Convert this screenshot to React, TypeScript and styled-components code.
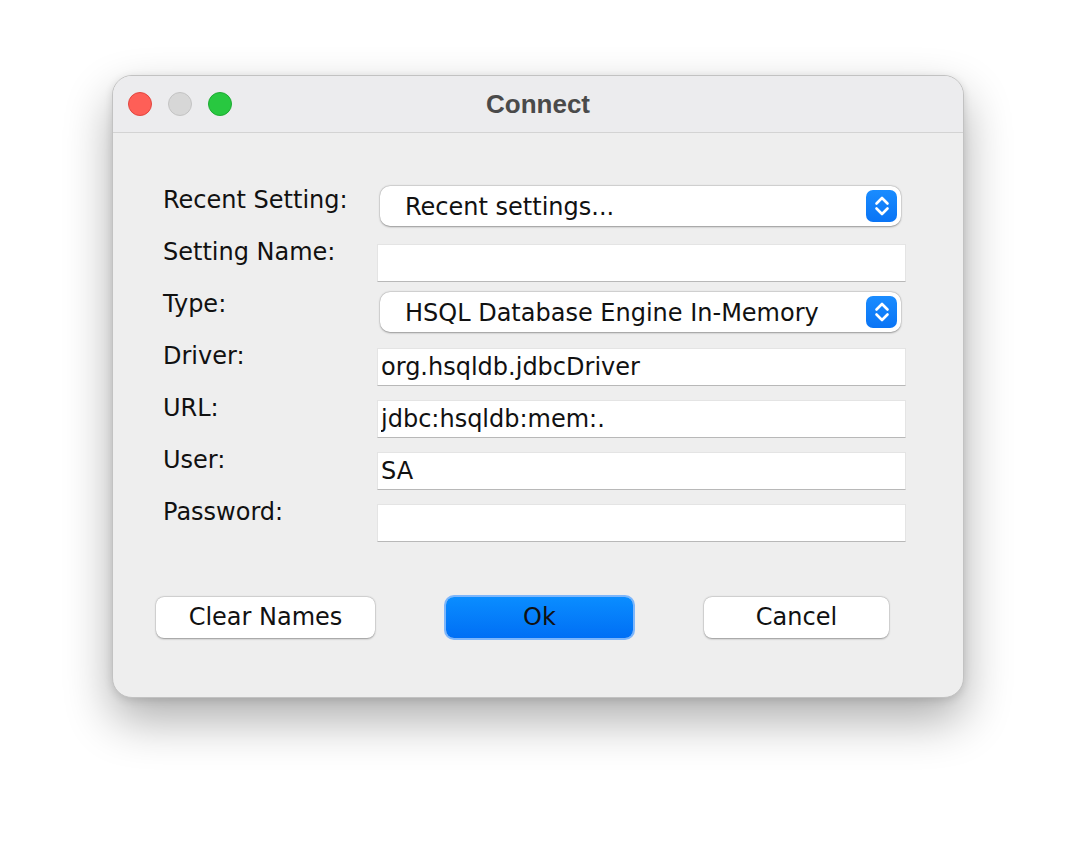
import React from 'react';
import styled, { createGlobalStyle } from 'styled-components';

const GlobalStyle = createGlobalStyle`
  html, body {
    margin: 0;
    padding: 0;
    background: #ffffff;
  }
  * {
    box-sizing: border-box;
  }
`;

const Page = styled.div`
  width: 1076px;
  height: 846px;
  padding: 75px 0 0 112px;
  background: #ffffff;
  font-family: 'DejaVu Sans', 'Verdana', sans-serif;
`;

const Window = styled.div`
  width: 852px;
  height: 623px;
  border-radius: 20px;
  background: #eeeeee;
  border: 1px solid #c2c2c2;
  box-shadow: 0 22px 48px rgba(0, 0, 0, 0.32), 0 2px 8px rgba(0, 0, 0, 0.12);
  overflow: hidden;
  display: flex;
  flex-direction: column;
`;

const TitleBar = styled.div`
  position: relative;
  height: 57px;
  flex: none;
  display: flex;
  align-items: center;
  justify-content: center;
  background: #ececee;
  border-bottom: 1px solid #d3d3d3;
`;

const Lights = styled.div`
  position: absolute;
  left: 15px;
  top: 16px;
  display: flex;
  gap: 16px;
`;

const Light = styled.span<{ $fill: string; $edge: string }>`
  width: 24px;
  height: 24px;
  border-radius: 50%;
  background: ${(p) => p.$fill};
  border: 1px solid ${(p) => p.$edge};
`;

const Title = styled.h1`
  margin: 0;
  font-family: 'Liberation Sans', Arial, sans-serif;
  font-weight: 700;
  font-size: 26px;
  color: #4a4a4a;
`;

const Body = styled.div`
  flex: 1;
  padding: 53px 57px 0 49px;
`;

const Form = styled.div`
  display: grid;
  grid-template-columns: 215px 1fr;
  grid-auto-rows: 52px;
`;

const Label = styled.label`
  align-self: start;
  font-size: 24px;
  color: #111111;
  line-height: normal;
  padding-left: 1px;
`;

const Combo = styled.div<{ $top?: number }>`
  align-self: start;
  margin: ${(p) => p.$top ?? 0}px 5px 0 3px;
  height: 40px;
  border-radius: 10px;
  background: #ffffff;
  box-shadow: 0 0.5px 2px rgba(0, 0, 0, 0.35), 0 0 0 0.5px rgba(0, 0, 0, 0.08);
  display: flex;
  align-items: center;
  justify-content: space-between;
  padding: 0 4px 0 25px;
  font-size: 24px;
  color: #111111;
`;

const ComboText = styled.span`
  padding-top: 2px;
`;

const Stepper = styled.span`
  width: 31px;
  height: 32px;
  border-radius: 7px;
  background: linear-gradient(#1a8cff, #0a74f5);
  display: flex;
  align-items: center;
  justify-content: center;
`;

const Field = styled.input`
  align-self: start;
  margin-top: 6px;
  height: 38px;
  width: 100%;
  background: #ffffff;
  border: 1px solid #e4e4e4;
  border-bottom-color: #b8b8b8;
  border-radius: 0;
  padding: 0 3px 1px 3px;
  font-family: 'DejaVu Sans', 'Verdana', sans-serif;
  font-size: 24px;
  color: #111111;
  outline: none;
`;

const ButtonRow = styled.div`
  margin: 47px 17px 0 -6px;
  display: flex;
  align-items: center;
  justify-content: space-between;
`;

const Button = styled.button<{ $w: number; $primary?: boolean }>`
  width: ${(p) => p.$w}px;
  height: 41px;
  border: none;
  border-radius: 8px;
  font-family: 'DejaVu Sans', 'Verdana', sans-serif;
  font-size: 24px;
  color: #111111;
  padding: 0 0 2px;
  background: ${(p) => (p.$primary ? 'linear-gradient(#0a8dff, #006ff5)' : '#ffffff')};
  box-shadow: ${(p) =>
    p.$primary
      ? '0 0 0 2px #7db6fb'
      : '0 0.5px 2px rgba(0, 0, 0, 0.35), 0 0 0 0.5px rgba(0, 0, 0, 0.08)'};
`;

const StepIcon: React.FC = () => (
  <svg width="16" height="24" viewBox="0 0 16 24">
    <path
      d="M2.5 9.5 L8 4 L13.5 9.5 M2.5 14.5 L8 20 L13.5 14.5"
      fill="none"
      stroke="#ffffff"
      strokeWidth="2.6"
      strokeLinecap="round"
      strokeLinejoin="round"
    />
  </svg>
);

const App: React.FC = () => {
  return (
    <Page>
      <GlobalStyle />
      <Window>
        <TitleBar>
          <Lights>
            <Light $fill="#fe5f57" $edge="#e2463f" />
            <Light $fill="#d7d7d7" $edge="#c3c3c3" />
            <Light $fill="#28c840" $edge="#1eaa32" />
          </Lights>
          <Title>Connect</Title>
        </TitleBar>
        <Body>
          <Form>
            <Label>Recent Setting:</Label>
            <Combo>
              <ComboText>Recent settings...</ComboText>
              <Stepper>
                <StepIcon />
              </Stepper>
            </Combo>
            <Label>Setting Name:</Label>
            <Field defaultValue="" />
            <Label>Type:</Label>
            <Combo $top={2}>
              <ComboText>HSQL Database Engine In-Memory</ComboText>
              <Stepper>
                <StepIcon />
              </Stepper>
            </Combo>
            <Label>Driver:</Label>
            <Field defaultValue="org.hsqldb.jdbcDriver" />
            <Label>URL:</Label>
            <Field defaultValue="jdbc:hsqldb:mem:." />
            <Label>User:</Label>
            <Field defaultValue="SA" />
            <Label>Password:</Label>
            <Field type="password" defaultValue="" />
          </Form>
          <ButtonRow>
            <Button $w={219}>Clear Names</Button>
            <Button $w={187} $primary>
              Ok
            </Button>
            <Button $w={185}>Cancel</Button>
          </ButtonRow>
        </Body>
      </Window>
    </Page>
  );
};

export default App;
